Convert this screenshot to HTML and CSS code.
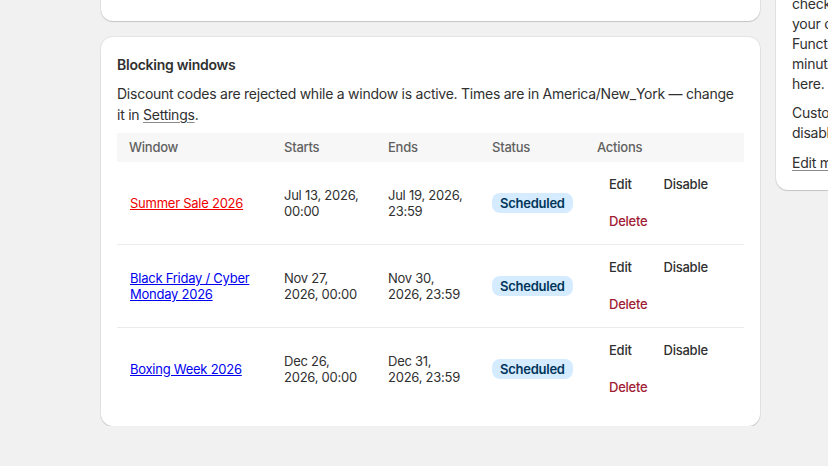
FILE: index.html
```html
<!DOCTYPE html>
<html>
<head>
  <title>Discount blocking</title>
  <link rel="stylesheet" href="styles.css">
</head>
<body>
  <div class="page">
    <div class="layout">
      <main class="main">
        <section class="card card-top">
          <h2 class="card-title">Function status</h2>
          <p class="status-line">Deployed (app_plugin), synced (shop_config)</p>
        </section>

        <section class="card">
          <h2 class="card-title">Blocking windows</h2>
          <p class="card-text">Discount codes are rejected while a window is active. Times are in America/New_York — change it in <a class="plain-link" href="#">Settings</a>.</p>

          <table class="windows">
            <colgroup>
              <col class="col-window">
              <col class="col-date">
              <col class="col-date">
              <col class="col-status">
              <col class="col-actions">
            </colgroup>
            <thead>
              <tr>
                <th>Window</th>
                <th>Starts</th>
                <th>Ends</th>
                <th>Status</th>
                <th>Actions</th>
              </tr>
            </thead>
            <tbody>
              <tr>
                <td><a class="window-link active" href="#">Summer Sale 2026</a></td>
                <td>Jul 13, 2026, 00:00</td>
                <td>Jul 19, 2026, 23:59</td>
                <td><span class="badge">Scheduled</span></td>
                <td>
                  <div class="actions">
                    <button class="btn">Edit</button>
                    <button class="btn">Disable</button>
                    <button class="btn btn-danger">Delete</button>
                  </div>
                </td>
              </tr>
              <tr>
                <td><a class="window-link" href="#">Black Friday / Cyber Monday 2026</a></td>
                <td>Nov 27, 2026, 00:00</td>
                <td>Nov 30, 2026, 23:59</td>
                <td><span class="badge">Scheduled</span></td>
                <td>
                  <div class="actions">
                    <button class="btn">Edit</button>
                    <button class="btn">Disable</button>
                    <button class="btn btn-danger">Delete</button>
                  </div>
                </td>
              </tr>
              <tr>
                <td><a class="window-link" href="#">Boxing Week 2026</a></td>
                <td>Dec 26, 2026, 00:00</td>
                <td>Dec 31, 2026, 23:59</td>
                <td><span class="badge">Scheduled</span></td>
                <td>
                  <div class="actions">
                    <button class="btn">Edit</button>
                    <button class="btn">Disable</button>
                    <button class="btn btn-danger">Delete</button>
                  </div>
                </td>
              </tr>
            </tbody>
          </table>
        </section>
      </main>

      <aside class="side">
        <div class="card side-card">
          <p class="side-text">Windows are enforced by the<br>discount function at<br>checkout. After you save,<br>your changes reach the<br>Function within a few<br>minutes and show up<br>here.</p>
          <p class="side-text">Customers see an error when<br>disabled codes are entered.</p>
          <a class="plain-link side-link" href="#">Edit messages</a>
        </div>
      </aside>
    </div>
  </div>
</body>
</html>
```

FILE: styles.css
```css
html, body {
  margin: 0;
  padding: 0;
}

body {
  font-family: Inter, "Noto Sans", sans-serif;
  font-size: 14px;
  letter-spacing: -0.25px;
  color: #303030;
  background-color: #f1f1f1;
  overflow: hidden;
}

/* the screenshot is scrolled down a little */
.page {
  margin-top: -63px;
  padding-left: 101px;
}

.layout {
  display: grid;
  grid-template-columns: 659px 260px;
  gap: 16px;
  align-items: start;
}

.main {
  display: flex;
  flex-direction: column;
  gap: 16px;
}

.card {
  background: #fff;
  border-radius: 12px;
  padding: 18px 16px 16px;
  box-shadow: 0 0 0 1px rgba(0, 0, 0, 0.05), 0 1px 1px rgba(0, 0, 0, 0.14);
}

.card-top {
  padding: 16px 16px 20px;
}

.card-title {
  margin: 0;
  font-size: 14px;
  line-height: 20px;
  font-weight: 600;
}

.card-text {
  margin: 8px 0 0;
  line-height: 21px;
}

.status-line {
  margin: 8px 0 0;
  line-height: 20px;
  text-align: right;
  padding-right: 100px;
}

.plain-link {
  color: #303030;
  text-decoration: underline;
  text-decoration-color: #8a8a8a;
  text-underline-offset: 2px;
}

/* table */
.windows {
  width: 100%;
  margin-top: 8px;
  border-collapse: collapse;
  table-layout: fixed;
}

.col-window { width: 155px; }
.col-date { width: 104px; }
.col-status { width: 105px; }
.col-actions { width: 159px; }

.windows th {
  background: #f7f7f7;
  color: #616161;
  font-size: 13px;
  font-weight: 500;
  line-height: 17px;
  text-align: left;
  padding: 6px 12px;
}

.windows td {
  font-size: 13px;
  padding: 8px 12px;
  vertical-align: middle;
  border-top: 1px solid #ebebeb;
}

.windows td:first-child {
  padding-left: 13px;
}

.windows tbody tr:first-child td {
  border-top: none;
}

.window-link {
  font-size: 13px;
  color: #0000ee;
}

.window-link.active {
  color: #ee0000;
}

.badge {
  display: inline-block;
  background: #d5ebff;
  color: #00355a;
  font-size: 13px;
  font-weight: 600;
  line-height: 20px;
  padding: 0 8px;
  border-radius: 8px;
}

.actions {
  display: flex;
  flex-wrap: wrap;
  gap: 8px;
}

.btn {
  font-family: inherit;
  font-size: 13px;
  font-weight: 500;
  letter-spacing: inherit;
  line-height: 17px;
  color: #303030;
  background: none;
  border: none;
  border-radius: 8px;
  padding: 6px 12px;
  cursor: pointer;
}

.btn-danger {
  color: #a01d33;
}

/* sidebar */
.side-card {
  padding: 17px 16px 17px;
}

.side-text {
  margin: 0 0 9px;
  line-height: 20px;
}

.side-link {
  display: inline-block;
  margin-top: 1px;
  line-height: 20px;
}
```
